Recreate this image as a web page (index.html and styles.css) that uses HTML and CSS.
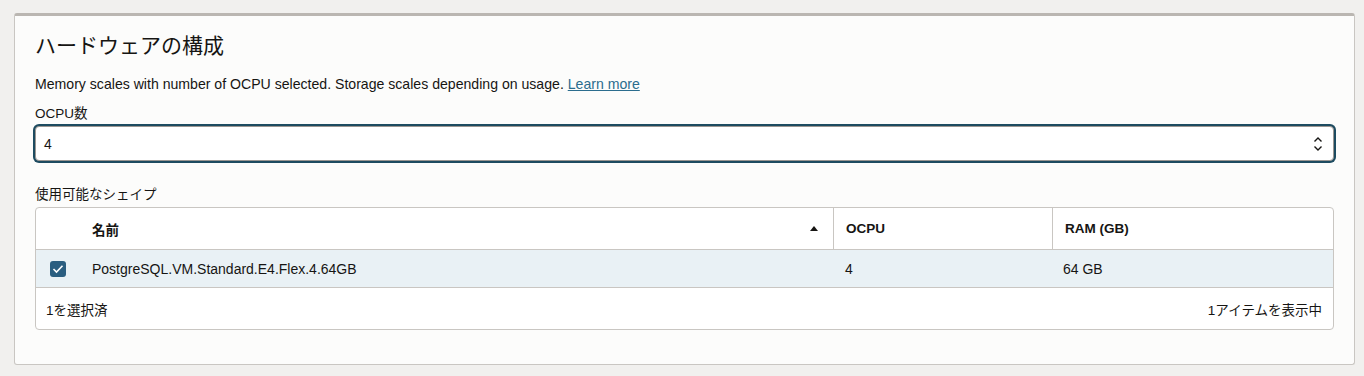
FILE: index.html
```html
<!DOCTYPE html>
<html lang="ja">
<head>
<meta charset="utf-8">
<title>ハードウェアの構成</title>
<link rel="stylesheet" href="styles.css">
</head>
<body>
<section class="card">
  <h2 class="title">ハードウェアの構成</h2>
  <p class="desc">Memory scales with number of OCPU selected. Storage scales depending on usage. <a href="#" class="link">Learn more</a></p>
  <label class="label">OCPU数</label>
  <div class="select">
    <span class="select-value">4</span>
    <svg class="spin" width="10" height="16" viewBox="0 0 10 16"><path d="M1.5 5.5 L5 2 L8.5 5.5" fill="none" stroke="#161513" stroke-width="1.4"/><path d="M1.5 10.5 L5 14 L8.5 10.5" fill="none" stroke="#161513" stroke-width="1.4"/></svg>
  </div>
  <div class="label label-table">使用可能なシェイプ</div>
  <div class="table">
    <div class="row head">
      <div class="cell c-check"></div>
      <div class="cell c-name"><span>名前</span><span class="sort"></span></div>
      <div class="cell c-ocpu">OCPU</div>
      <div class="cell c-ram">RAM (GB)</div>
    </div>
    <div class="row data">
      <div class="cell c-check"><span class="checkbox"><svg width="12" height="10" viewBox="0 0 12 10"><path d="M1.5 5 L4.5 8 L10.5 1.8" fill="none" stroke="#fff" stroke-width="1.6"/></svg></span></div>
      <div class="cell c-name">PostgreSQL.VM.Standard.E4.Flex.4.64GB</div>
      <div class="cell c-ocpu">4</div>
      <div class="cell c-ram">64 GB</div>
    </div>
    <div class="foot">
      <span>1を選択済</span>
      <span>1アイテムを表示中</span>
    </div>
  </div>
</section>
</body>
</html>
```

FILE: styles.css
```css
html, body {
  margin: 0;
  padding: 0;
}
body {
  background: #f1f0ee;
  font-family: "Liberation Sans", "Noto Sans CJK JP", sans-serif;
  color: #161513;
  padding: 13px 9px 11px 14px;
}
.card {
  background: #fcfcfb;
  border: 1px solid #c9c6c2;
  border-top: 3px solid #bab6b1;
  border-radius: 3px;
  padding: 18px 20px 34px 20px;
}
.title {
  margin: 0;
  font-size: 21px;
  font-weight: 400;
  line-height: 24px;
}
.desc {
  margin: 16px 0 0;
  font-size: 14.1px;
  line-height: 20px;
}
.link {
  color: #2b6d8e;
  text-decoration: underline;
}
.label {
  display: block;
  margin-top: 10px;
  font-size: 13.5px;
  line-height: 20px;
}
.select {
  margin-top: 2px;
  height: 33px;
  border: 1px solid #9a9692;
  border-radius: 4px;
  box-shadow: 0 0 0 2px #1d4b60;
  background: #fff;
  display: flex;
  align-items: center;
  justify-content: space-between;
  padding: 0 10px 0 8px;
  font-size: 14px;
}
.spin {
  display: block;
}
.label-table {
  margin-top: 24px;
}
.table {
  margin-top: 2px;
  border: 1px solid #c9c6c2;
  border-radius: 4px;
  background: #fff;
  font-size: 13.5px;
}
.row {
  display: flex;
  border-bottom: 1px solid #c9c6c2;
}
.head {
  height: 41px;
  font-weight: 700;
}
.data {
  height: 37px;
  background: #e9f1f5;
  font-size: 14px;
}
.cell {
  display: flex;
  align-items: center;
  padding: 0 12px;
  box-sizing: border-box;
}
.c-check {
  width: 44px;
  justify-content: center;
  padding: 0;
}
.c-name {
  width: 753px;
  justify-content: space-between;
}
.c-ocpu {
  width: 219px;
}
.c-ram {
  flex: 1;
}
.head .c-ocpu, .head .c-ram {
  border-left: 1px solid #c9c6c2;
}
.data .c-ram {
  padding-left: 11px;
}
.data .c-ocpu {
  padding-left: 12px;
}
.sort {
  width: 0;
  height: 0;
  border-left: 4.5px solid transparent;
  border-right: 4.5px solid transparent;
  border-bottom: 5px solid #161513;
  margin-right: 3px;
}
.checkbox {
  width: 16px;
  height: 16px;
  border-radius: 3px;
  background: #2a5e80;
  display: flex;
  align-items: center;
  justify-content: center;
}
.foot {
  height: 41px;
  display: flex;
  align-items: center;
  justify-content: space-between;
  padding: 0 11px 0 10px;
}
```
